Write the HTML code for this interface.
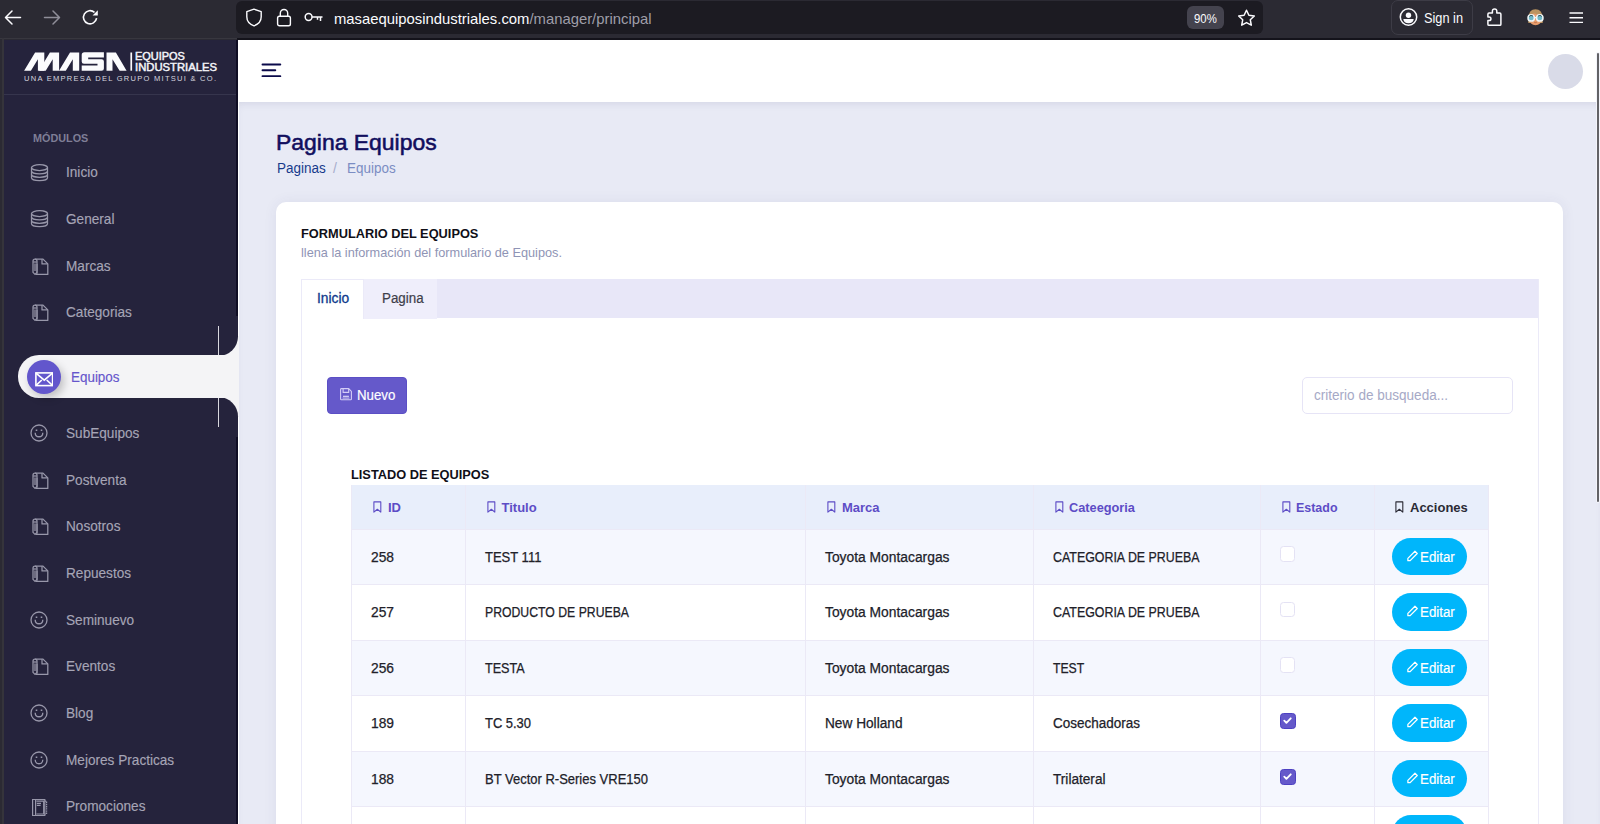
<!DOCTYPE html>
<html><head><meta charset="utf-8"><title>Pagina Equipos</title>
<style>
*{box-sizing:border-box;margin:0;padding:0}
html,body{width:1600px;height:824px;overflow:hidden;background:#2b2a33;font-family:"Liberation Sans",sans-serif}
.t{position:absolute;white-space:nowrap;line-height:1;transform-origin:0 0}
.ic{position:absolute;display:block}
.abs{position:absolute}
.row{position:absolute;left:351px;width:1137.4px}
.vl{position:absolute;top:485px;bottom:0;width:1px;background:#ebe9f6}
.hl{position:absolute;left:351px;width:1137.4px;height:1px;background:#ebe9f6}
.cb{position:absolute;left:1279.5px;width:15.5px;height:15.5px;border:1px solid #e4e2f4;border-radius:3.5px;background:#fff}
.cb.on{background:#6559ca;border-color:#4d41c2}
.cb.on svg{position:absolute;left:-1px;top:-1px}
.btn-ed{position:absolute;left:1392px;width:75px;height:37.5px;border-radius:19px;background:#00b6fb}
</style></head><body>
<!-- browser toolbar -->
<div class=abs style="left:0;top:0;width:1600px;height:38px;background:#2b2a33"></div>
<div class=abs style="left:0;top:37.5px;width:237px;height:0.7px;background:#242328"></div>
<div class=abs style="left:0;top:38.3px;width:237px;height:1.2px;background:#38373f"></div>
<div class=abs style="left:237px;top:38px;width:1363px;height:1.5px;background:#14131b"></div>
<div class=abs style="left:2px;top:38px;width:2px;height:786px;background:#35343b"></div>
<svg class=ic style="left:4px;top:9px" width="18" height="17" viewBox="0 0 18 17" fill="none" stroke="#fbfbfe" stroke-width="1.5" stroke-linecap="round" stroke-linejoin="round"><path d="M16.5 8.5H2M8 2L1.5 8.5 8 15"/></svg>
<svg class=ic style="left:43px;top:9px" width="18" height="17" viewBox="0 0 18 17" fill="none" stroke="#8f8e99" stroke-width="1.5" stroke-linecap="round" stroke-linejoin="round"><path d="M1.5 8.5H16M10 2l6.5 6.5L10 15"/></svg>
<svg class=ic style="left:81.3px;top:7.9px" width="19" height="19" viewBox="0 0 19 19" fill="none" stroke="#fbfbfe" stroke-width="1.6"><path d="M15.6 10.2A6.6 6.6 0 1 1 13.5 4.3"/><path d="M16.8 2.2v5.2h-5.2z" fill="#fbfbfe" stroke="none"/></svg>
<div class=abs style="left:236px;top:1px;width:1026.5px;height:33px;border-radius:6px;background:#1c1b22"></div>
<svg class=ic style="left:245px;top:8px" width="18" height="19" viewBox="0 0 18 19" fill="none" stroke="#fbfbfe" stroke-width="1.4" stroke-linejoin="round"><path d="M9 1.2L1.8 3.6v5.2c0 4.4 3.2 7.6 7.2 9 4-1.4 7.2-4.6 7.2-9V3.6z"/></svg>
<svg class=ic style="left:276px;top:8px" width="16" height="19" viewBox="0 0 16 19" fill="none" stroke="#fbfbfe" stroke-width="1.4"><rect x="1.6" y="8.3" width="12.8" height="9.5" rx="1.8"/><path d="M4.3 8.3V5.2a3.7 3.7 0 0 1 7.4 0v3.1"/></svg>
<svg class=ic style="left:304px;top:12px" width="20" height="11" viewBox="0 0 20 11" fill="none" stroke="#fbfbfe" stroke-width="1.5"><circle cx="4.6" cy="5" r="3.4"/><path d="M8 5h10.5M16.5 5v4M13.5 5v2.8"/></svg>
<div class=abs style="left:1187px;top:6px;width:37px;height:22.5px;border-radius:6px;background:#44434e"></div>
<svg class=ic style="left:1236.5px;top:9.3px" width="19" height="18" viewBox="0 0 19 18" fill="none" stroke="#fbfbfe" stroke-width="1.5" stroke-linejoin="round" stroke-linecap="round"><path d="M9.5 1.3l2.4 5 5.4.7-4 3.8 1 5.4-4.8-2.6-4.8 2.6 1-5.4-4-3.8 5.4-.7z"/></svg>
<div class=abs style="left:1391px;top:0px;width:81.5px;height:34.5px;border-radius:7px;border:1px solid #3d3c46"></div>
<svg class=ic style="left:1399.4px;top:6.9px" width="19" height="20" viewBox="0 0 19 20" fill="none" stroke="#fbfbfe" stroke-width="1.5"><circle cx="9.5" cy="10" r="8.2"/><circle cx="9.5" cy="8.3" r="2.7" fill="#fbfbfe" stroke="none"/><path d="M4.3 11.9H14.7Q14.1 16.3 9.5 16.3Q4.9 16.3 4.3 11.9Z" fill="#fbfbfe" stroke="none"/></svg>
<svg class=ic style="left:1486.3px;top:8px" width="17" height="19" viewBox="0 0 17 19" fill="none" stroke="#fbfbfe" stroke-width="1.5" stroke-linejoin="round"><path d="M6.4 3.1a2.2 2.2 0 0 1 4.4 0V5.1H13.8Q14.9 5.1 14.9 6.2V16.2Q14.9 17.3 13.8 17.3H3Q1.9 17.3 1.9 16.2V12.6H3.1a1.85 1.85 0 0 0 0-3.7H1.9V6.2Q1.9 5.1 3 5.1H6.4z"/></svg>
<svg class=ic style="left:1526px;top:8px" width="19" height="18" viewBox="0 0 19 18"><path d="M2.3 10C2.3 4.6 5.4 1.2 9.5 1.2S16.7 4.6 16.7 10V15H2.3z" fill="#bb9461"/><ellipse cx="9.5" cy="11" rx="6.3" ry="6.2" fill="#e79d6d"/><path d="M3 9C4 5.5 6.5 3.6 9.5 3.6S15 5.5 16 9C14 7 12 6.3 10.5 6.3 9.5 5.5 8 5.3 6.5 6 5 6.6 4 7.5 3 9z" fill="#bb9461"/><circle cx="5.2" cy="9.9" r="3.2" fill="#6fb9c9" stroke="#eef5f7" stroke-width="1.5"/><circle cx="13.8" cy="9.9" r="3.2" fill="#6fb9c9" stroke="#eef5f7" stroke-width="1.5"/><path d="M8.4 9.6h2.2" stroke="#eef5f7" stroke-width="1.3"/><path d="M3.3 8.4a2.4 2.4 0 0 1 3.8 0M11.9 8.4a2.4 2.4 0 0 1 3.8 0" stroke="#24414a" stroke-width="1" fill="none"/><path d="M8.2 14.3c.8.4 1.8.4 2.6 0" stroke="#b0603c" stroke-width=".7" fill="none"/></svg>
<svg class=ic style="left:1569px;top:11.5px" width="14.5" height="11.5" viewBox="0 0 14.5 11.5" stroke="#fbfbfe" stroke-width="1.5"><path d="M.5 1h13.5M.5 5.7h13.5M.5 10.4h13.5"/></svg>

<!-- page -->
<div class=abs style="left:4px;top:39.5px;width:1596px;height:785px;background:#e8eaf5;overflow:hidden"></div>
<!-- header -->
<div class=abs style="left:239px;top:102.2px;width:1361px;height:723px;box-shadow:inset 0 5px 8px -4px rgba(40,40,90,.12)"></div>
<div class=abs style="left:237px;top:39.5px;width:1363px;height:62.7px;background:#fff"></div>
<div class=abs style="left:237px;top:39.5px;width:2px;height:785px;background:#fff"></div>
<svg class=ic style="left:261px;top:63.3px" width="21" height="14" viewBox="0 0 21 14" stroke="#0b0a4a" stroke-width="1.9" stroke-linecap="round"><path d="M1.5 1.5h17.8M1.5 7.3h12.8M1.5 13.2h17.8"/></svg>
<div class=abs style="left:1548px;top:54px;width:35px;height:35px;border-radius:50%;background:#d9dbe8"></div>
<!-- scrollbar -->
<div class=abs style="left:1596px;top:52px;width:3.5px;height:451px;border-radius:2px;background:#f3f4fa"></div>
<div class=abs style="left:1597.2px;top:53px;width:1.6px;height:449px;border-radius:1px;background:#626266"></div>

<!-- sidebar -->
<div class=abs style="left:4px;top:39.5px;width:233px;height:785px;background:#25233c"></div>
<div class=abs style="left:236.3px;top:39.5px;width:1.5px;height:785px;background:#0f0d24"></div>
<div class=abs style="left:4px;top:93.5px;width:232px;height:1px;background:#36354d"></div>
<!-- logo -->
<svg class=ic style="left:0;top:0" width="240" height="100" viewBox="0 0 240 100" fill="#fbfbfd">
<path d="M24.1 70.7L35.1 52.5H44.3V70.7H37.9V59.2L30.9 70.7Z"/>
<path d="M38.9 70.7L49.9 52.5H59.1V70.7H52.7V59.2L45.7 70.7Z"/>
<path d="M59 70.7L70 52.5H79.2V70.7H72.8V59.2L65.8 70.7Z"/>
<path d="M84.5 52.3H103.9V57.5H88.2V59.3H101.6Q103.9 59.3 103.9 61.6V68.5Q103.9 70.8 101.6 70.8H81.7V65.5H97.5V63.7H84Q81.7 63.7 81.7 61.4V54.9Q81.7 52.3 84.5 52.3Z"/>
<path d="M106.5 52.5H115.9L126.6 70.7H119.6L112.5 59.2V70.7H106.5Z"/>
<rect x="130.4" y="52.5" width="1.7" height="18.2"/>
</svg>
<!-- active item -->
<div class=abs style="left:218px;top:336px;width:21px;height:81px;background:#f4f4f6"></div>
<div class=abs style="left:4px;top:316px;width:233.6px;height:40px;background:#25233c;border-bottom-right-radius:19.5px"></div>
<div class=abs style="left:4px;top:396.5px;width:233.6px;height:40px;background:#25233c;border-top-right-radius:19.5px"></div>
<div class=abs style="left:218px;top:325.5px;width:1px;height:30px;background:#d8d8de"></div>
<div class=abs style="left:218px;top:396.5px;width:1px;height:30px;background:#d8d8de"></div>
<div class=abs style="left:18.3px;top:355.3px;width:220.7px;height:42.3px;background:#f4f4f6;border-radius:21px 0 0 21px"></div>
<div class=abs style="left:26.7px;top:360px;width:34px;height:34px;border-radius:50%;background:#6256cc;box-shadow:3px 4px 8px rgba(0,0,0,.22)"></div>
<svg class=ic style="left:34.8px;top:372px" width="18.5" height="14.5" viewBox="0 0 18.5 14.5" fill="none" stroke="#fff" stroke-width="1.6"><rect x=".9" y=".9" width="16.7" height="12.7"/><path d="M1 1.2l8.25 7 8.25-7M1 13.3l5.8-5.3M17.5 13.3l-5.8-5.3"/></svg>
<svg class=ic style="left:30px;top:162.7px" width="19" height="19" viewBox="0 0 19 19" fill="none" stroke="#9897aa" stroke-width="1.25"><ellipse cx="9.5" cy="4.6" rx="8" ry="2.9"/><path d="M1.5 4.6v10.2c0 1.6 3.6 2.9 8 2.9s8-1.3 8-2.9V4.6"/><path d="M1.5 8c0 1.6 3.6 2.9 8 2.9s8-1.3 8-2.9M1.5 11.4c0 1.6 3.6 2.9 8 2.9s8-1.3 8-2.9"/></svg>
<svg class=ic style="left:30px;top:209.3px" width="19" height="19" viewBox="0 0 19 19" fill="none" stroke="#9897aa" stroke-width="1.25"><ellipse cx="9.5" cy="4.6" rx="8" ry="2.9"/><path d="M1.5 4.6v10.2c0 1.6 3.6 2.9 8 2.9s8-1.3 8-2.9V4.6"/><path d="M1.5 8c0 1.6 3.6 2.9 8 2.9s8-1.3 8-2.9M1.5 11.4c0 1.6 3.6 2.9 8 2.9s8-1.3 8-2.9"/></svg>
<svg class=ic style="left:30.5px;top:256.7px" width="19" height="19" viewBox="0 0 19 19" fill="none" stroke="#9897aa" stroke-width="1.25" stroke-linejoin="round"><path d="M4 2.1H12L16.8 6.9V17.4H4.5"/><path d="M11 2.3V6.9H16.6"/><path d="M2 4.2Q2 2.1 4 2.1Q6 2.1 6 4.2V15.4L4 17.4L2 15.4Z"/><path d="M4 6.5V14"/><path d="M2.2 5h3.6"/><path d="M6 6.9v10.5" stroke-width="1"/></svg>
<svg class=ic style="left:30.5px;top:303.3px" width="19" height="19" viewBox="0 0 19 19" fill="none" stroke="#9897aa" stroke-width="1.25" stroke-linejoin="round"><path d="M4 2.1H12L16.8 6.9V17.4H4.5"/><path d="M11 2.3V6.9H16.6"/><path d="M2 4.2Q2 2.1 4 2.1Q6 2.1 6 4.2V15.4L4 17.4L2 15.4Z"/><path d="M4 6.5V14"/><path d="M2.2 5h3.6"/><path d="M6 6.9v10.5" stroke-width="1"/></svg>
<svg class=ic style="left:30.4px;top:424.4px" width="18" height="18" viewBox="0 0 18 18" fill="none" stroke="#9897aa" stroke-width="1.3"><circle cx="9" cy="9" r="8"/><path d="M5.2 8.7C5.2 14.1 12.8 14.1 12.8 8.7"/><path d="M5.7 6.3h1.6M10.7 6.3h1.6" stroke-width="1.5"/></svg>
<svg class=ic style="left:30.5px;top:470.7px" width="19" height="19" viewBox="0 0 19 19" fill="none" stroke="#9897aa" stroke-width="1.25" stroke-linejoin="round"><path d="M4 2.1H12L16.8 6.9V17.4H4.5"/><path d="M11 2.3V6.9H16.6"/><path d="M2 4.2Q2 2.1 4 2.1Q6 2.1 6 4.2V15.4L4 17.4L2 15.4Z"/><path d="M4 6.5V14"/><path d="M2.2 5h3.6"/><path d="M6 6.9v10.5" stroke-width="1"/></svg>
<svg class=ic style="left:30.5px;top:517.3px" width="19" height="19" viewBox="0 0 19 19" fill="none" stroke="#9897aa" stroke-width="1.25" stroke-linejoin="round"><path d="M4 2.1H12L16.8 6.9V17.4H4.5"/><path d="M11 2.3V6.9H16.6"/><path d="M2 4.2Q2 2.1 4 2.1Q6 2.1 6 4.2V15.4L4 17.4L2 15.4Z"/><path d="M4 6.5V14"/><path d="M2.2 5h3.6"/><path d="M6 6.9v10.5" stroke-width="1"/></svg>
<svg class=ic style="left:30.5px;top:564.0px" width="19" height="19" viewBox="0 0 19 19" fill="none" stroke="#9897aa" stroke-width="1.25" stroke-linejoin="round"><path d="M4 2.1H12L16.8 6.9V17.4H4.5"/><path d="M11 2.3V6.9H16.6"/><path d="M2 4.2Q2 2.1 4 2.1Q6 2.1 6 4.2V15.4L4 17.4L2 15.4Z"/><path d="M4 6.5V14"/><path d="M2.2 5h3.6"/><path d="M6 6.9v10.5" stroke-width="1"/></svg>
<svg class=ic style="left:30.4px;top:611.1px" width="18" height="18" viewBox="0 0 18 18" fill="none" stroke="#9897aa" stroke-width="1.3"><circle cx="9" cy="9" r="8"/><path d="M5.2 8.7C5.2 14.1 12.8 14.1 12.8 8.7"/><path d="M5.7 6.3h1.6M10.7 6.3h1.6" stroke-width="1.5"/></svg>
<svg class=ic style="left:30.5px;top:657.3px" width="19" height="19" viewBox="0 0 19 19" fill="none" stroke="#9897aa" stroke-width="1.25" stroke-linejoin="round"><path d="M4 2.1H12L16.8 6.9V17.4H4.5"/><path d="M11 2.3V6.9H16.6"/><path d="M2 4.2Q2 2.1 4 2.1Q6 2.1 6 4.2V15.4L4 17.4L2 15.4Z"/><path d="M4 6.5V14"/><path d="M2.2 5h3.6"/><path d="M6 6.9v10.5" stroke-width="1"/></svg>
<svg class=ic style="left:30.4px;top:704.4px" width="18" height="18" viewBox="0 0 18 18" fill="none" stroke="#9897aa" stroke-width="1.3"><circle cx="9" cy="9" r="8"/><path d="M5.2 8.7C5.2 14.1 12.8 14.1 12.8 8.7"/><path d="M5.7 6.3h1.6M10.7 6.3h1.6" stroke-width="1.5"/></svg>
<svg class=ic style="left:30.4px;top:751.1px" width="18" height="18" viewBox="0 0 18 18" fill="none" stroke="#9897aa" stroke-width="1.3"><circle cx="9" cy="9" r="8"/><path d="M5.2 8.7C5.2 14.1 12.8 14.1 12.8 8.7"/><path d="M5.7 6.3h1.6M10.7 6.3h1.6" stroke-width="1.5"/></svg>
<svg class=ic style="left:31px;top:797.8px" width="18" height="19" viewBox="0 0 18 19" fill="none" stroke="#9897aa" stroke-width="1.2"><path d="M1.6 1.5h12.2v16H1.6z"/><path d="M4.6 1.5v16M5.5 3.2h7.2v12.8H5.5"/><path d="M13.8 3.2h1.8v12.8h-1.8" stroke-dasharray="1.4 .8"/><path d="M5.8 5.4h4.2M5.8 7.4h3.8" stroke-width="1.1"/></svg>

<!-- title area -->
<!-- card -->
<div class=abs style="left:276px;top:202px;width:1287px;height:700px;background:#fff;border-radius:10px;box-shadow:0 0 14px rgba(60,60,120,.07)"></div>
<div class=abs style="left:300.5px;top:279px;width:1238px;height:560px;border:1px solid #ebeaf8;border-top:none"></div>
<div class=abs style="left:300.5px;top:279px;width:1237.4px;height:39.2px;background:#e8e7f8"></div>
<div class=abs style="left:363.3px;top:279px;width:74px;height:39.5px;background:#efeefb"></div>
<div class=abs style="left:300.5px;top:279px;width:63px;height:40px;background:#fff;border:1px solid #ebeaf8;border-bottom:none"></div>
<div class=abs style="left:326.5px;top:377.2px;width:80.5px;height:36.6px;border-radius:4px;background:#6559ca;border:1px solid #5b4fc5"></div>
<svg class=ic style="left:340px;top:388px" width="12" height="12.5" viewBox="0 0 12 12.5" fill="none" stroke="#d4cdf6" stroke-width="1.1" stroke-linejoin="round"><path d="M1.4 .6H8.7L11.4 3.3V10.9Q11.4 11.7 10.6 11.7H1.4Q.6 11.7 .6 10.9V1.4Q.6 .6 1.4 .6Z"/><path d="M3.1 .7V4.4H8.7V.7"/><path d="M3 8.3H8.9" stroke="#e4e0fa"/><path d="M2.6 9.2H9.4V11H2.6z" fill="#9f95e0" stroke="none"/></svg>
<div class=abs style="left:1301.5px;top:377.2px;width:211px;height:36.4px;border-radius:5px;border:1px solid #e6e4f6;background:#fff"></div>
<!-- table -->
<div class=abs style="left:351px;top:485px;width:1137.4px;height:44px;background:#e8eefb"></div>
<div class=row style="top:529.0px;height:55.5px;background:#f5f7fe"></div>
<div class=cb style="top:546.4px"></div>
<div class=btn-ed style="top:537.9px"></div>
<svg class=ic style="left:1405.5px;top:549.5px" width="12.5" height="12.5" viewBox="0 0 12 12" fill="none" stroke="#fff" stroke-width="1.2" stroke-linejoin="round"><path d="M8.6 1.2l2.2 2.2-6.8 6.8H1.8V8z"/></svg>
<div class=row style="top:584.5px;height:55.5px;background:#ffffff"></div>
<div class=cb style="top:601.9px"></div>
<div class=btn-ed style="top:593.4px"></div>
<svg class=ic style="left:1405.5px;top:605.0px" width="12.5" height="12.5" viewBox="0 0 12 12" fill="none" stroke="#fff" stroke-width="1.2" stroke-linejoin="round"><path d="M8.6 1.2l2.2 2.2-6.8 6.8H1.8V8z"/></svg>
<div class=row style="top:640.0px;height:55.5px;background:#f5f7fe"></div>
<div class=cb style="top:657.4px"></div>
<div class=btn-ed style="top:648.9px"></div>
<svg class=ic style="left:1405.5px;top:660.5px" width="12.5" height="12.5" viewBox="0 0 12 12" fill="none" stroke="#fff" stroke-width="1.2" stroke-linejoin="round"><path d="M8.6 1.2l2.2 2.2-6.8 6.8H1.8V8z"/></svg>
<div class=row style="top:695.5px;height:55.5px;background:#ffffff"></div>
<div class="cb on" style="top:713.0px;height:16px;width:16px"><svg width="15.5" height="15.5" viewBox="0 0 16 16"><path d="M4.4 7.9l2.2 2.2 4.5-4.6" fill="none" stroke="#fff" stroke-width="1.9" stroke-linecap="round" stroke-linejoin="round"/></svg></div>
<div class=btn-ed style="top:704.4px"></div>
<svg class=ic style="left:1405.5px;top:716.0px" width="12.5" height="12.5" viewBox="0 0 12 12" fill="none" stroke="#fff" stroke-width="1.2" stroke-linejoin="round"><path d="M8.6 1.2l2.2 2.2-6.8 6.8H1.8V8z"/></svg>
<div class=row style="top:751.0px;height:55.5px;background:#f5f7fe"></div>
<div class="cb on" style="top:768.5px;height:16px;width:16px"><svg width="15.5" height="15.5" viewBox="0 0 16 16"><path d="M4.4 7.9l2.2 2.2 4.5-4.6" fill="none" stroke="#fff" stroke-width="1.9" stroke-linecap="round" stroke-linejoin="round"/></svg></div>
<div class=btn-ed style="top:759.9px"></div>
<svg class=ic style="left:1405.5px;top:771.5px" width="12.5" height="12.5" viewBox="0 0 12 12" fill="none" stroke="#fff" stroke-width="1.2" stroke-linejoin="round"><path d="M8.6 1.2l2.2 2.2-6.8 6.8H1.8V8z"/></svg>
<div class=row style="top:806.5px;height:55.5px;background:#ffffff"></div>
<div class=btn-ed style="top:815.4px"></div>
<svg class=ic style="left:1405.5px;top:827.0px" width="12.5" height="12.5" viewBox="0 0 12 12" fill="none" stroke="#fff" stroke-width="1.2" stroke-linejoin="round"><path d="M8.6 1.2l2.2 2.2-6.8 6.8H1.8V8z"/></svg>
<div class=vl style="left:465.4px"></div>
<div class=vl style="left:805.2px"></div>
<div class=vl style="left:1032.6px"></div>
<div class=vl style="left:1259.8px"></div>
<div class=vl style="left:1373.8px"></div>
<div class=hl style="top:528.5px"></div>
<div class=hl style="top:584.0px"></div>
<div class=hl style="top:639.5px"></div>
<div class=hl style="top:695.0px"></div>
<div class=hl style="top:750.5px"></div>
<div class=hl style="top:806.0px"></div>
<svg class=ic style="left:373px;top:500.8px" width="9" height="12" viewBox="0 0 9 12" fill="none" stroke="#5d4cc6" stroke-width="1.1" stroke-linejoin="round"><path d="M.9 .9h6.9v10.2L4.35 8.3 .9 11.1z"/></svg>
<svg class=ic style="left:486.5px;top:500.8px" width="9" height="12" viewBox="0 0 9 12" fill="none" stroke="#5d4cc6" stroke-width="1.1" stroke-linejoin="round"><path d="M.9 .9h6.9v10.2L4.35 8.3 .9 11.1z"/></svg>
<svg class=ic style="left:827px;top:500.8px" width="9" height="12" viewBox="0 0 9 12" fill="none" stroke="#5d4cc6" stroke-width="1.1" stroke-linejoin="round"><path d="M.9 .9h6.9v10.2L4.35 8.3 .9 11.1z"/></svg>
<svg class=ic style="left:1054.5px;top:500.8px" width="9" height="12" viewBox="0 0 9 12" fill="none" stroke="#5d4cc6" stroke-width="1.1" stroke-linejoin="round"><path d="M.9 .9h6.9v10.2L4.35 8.3 .9 11.1z"/></svg>
<svg class=ic style="left:1282px;top:500.8px" width="9" height="12" viewBox="0 0 9 12" fill="none" stroke="#5d4cc6" stroke-width="1.1" stroke-linejoin="round"><path d="M.9 .9h6.9v10.2L4.35 8.3 .9 11.1z"/></svg>
<svg class=ic style="left:1395px;top:500.8px" width="9" height="12" viewBox="0 0 9 12" fill="none" stroke="#2a2a35" stroke-width="1.1" stroke-linejoin="round"><path d="M.9 .9h6.9v10.2L4.35 8.3 .9 11.1z"/></svg>
<div class=abs style="left:350.5px;top:485px;width:1px;height:339px;background:#ebe9f6"></div>
<div class=abs style="left:1488px;top:485px;width:1px;height:339px;background:#ebe9f6"></div>
<div class=t style="left:333.5px;top:11.57px;font-size:14.8px;color:#9f9ea8;transform:scaleX(1.0026);"><span style="color:#fbfbfe">masaequiposindustriales.com</span>/manager/principal</div>
<div class=t style="left:1194.2px;top:12.76px;font-size:12.8px;color:#fbfbfe;transform:scaleX(0.8898);">90%</div>
<div class=t style="left:1424.3px;top:11.05px;font-size:14px;color:#fbfbfe;transform:scaleX(0.9109);">Sign in</div>
<div class=t style="left:135.3px;top:52.10px;font-size:10.4px;color:#f4f4f8;transform:scaleX(1.0536);-webkit-text-stroke:0.45px #f4f4f8;">EQUIPOS</div>
<div class=t style="left:135.3px;top:62.60px;font-size:10.4px;color:#f4f4f8;transform:scaleX(1.0841);-webkit-text-stroke:0.45px #f4f4f8;">INDUSTRIALES</div>
<div class=t style="left:24.0px;top:74.53px;font-size:8.0px;color:#d6d5df;transform:scaleX(0.9400);letter-spacing:1.35px;">UNA EMPRESA DEL GRUPO MITSUI &amp; CO.</div>
<div class=t style="left:32.8px;top:132.61px;font-size:10.5px;color:#7f7e96;font-weight:700;transform:scaleX(1.0303);">MÓDULOS</div>
<div class=t style="left:66.3px;top:165.37px;font-size:14.8px;color:#a6a5b6;transform:scaleX(0.9200);-webkit-text-stroke:0.15px #a6a5b6;">Inicio</div>
<div class=t style="left:66.3px;top:212.07px;font-size:14.8px;color:#a6a5b6;transform:scaleX(0.9200);-webkit-text-stroke:0.15px #a6a5b6;">General</div>
<div class=t style="left:66.3px;top:258.77px;font-size:14.8px;color:#a6a5b6;transform:scaleX(0.9200);-webkit-text-stroke:0.15px #a6a5b6;">Marcas</div>
<div class=t style="left:66.3px;top:305.37px;font-size:14.8px;color:#a6a5b6;transform:scaleX(0.9200);-webkit-text-stroke:0.15px #a6a5b6;">Categorias</div>
<div class=t style="left:66.3px;top:426.07px;font-size:14.8px;color:#a6a5b6;transform:scaleX(0.9200);-webkit-text-stroke:0.15px #a6a5b6;">SubEquipos</div>
<div class=t style="left:66.3px;top:472.77px;font-size:14.8px;color:#a6a5b6;transform:scaleX(0.9200);-webkit-text-stroke:0.15px #a6a5b6;">Postventa</div>
<div class=t style="left:66.3px;top:519.37px;font-size:14.8px;color:#a6a5b6;transform:scaleX(0.9200);-webkit-text-stroke:0.15px #a6a5b6;">Nosotros</div>
<div class=t style="left:66.3px;top:566.07px;font-size:14.8px;color:#a6a5b6;transform:scaleX(0.9200);-webkit-text-stroke:0.15px #a6a5b6;">Repuestos</div>
<div class=t style="left:66.3px;top:612.77px;font-size:14.8px;color:#a6a5b6;transform:scaleX(0.9200);-webkit-text-stroke:0.15px #a6a5b6;">Seminuevo</div>
<div class=t style="left:66.3px;top:659.37px;font-size:14.8px;color:#a6a5b6;transform:scaleX(0.9200);-webkit-text-stroke:0.15px #a6a5b6;">Eventos</div>
<div class=t style="left:66.3px;top:706.07px;font-size:14.8px;color:#a6a5b6;transform:scaleX(0.9200);-webkit-text-stroke:0.15px #a6a5b6;">Blog</div>
<div class=t style="left:66.3px;top:752.77px;font-size:14.8px;color:#a6a5b6;transform:scaleX(0.9200);-webkit-text-stroke:0.15px #a6a5b6;">Mejores Practicas</div>
<div class=t style="left:66.3px;top:799.37px;font-size:14.8px;color:#a6a5b6;transform:scaleX(0.9200);-webkit-text-stroke:0.15px #a6a5b6;">Promociones</div>
<div class=t style="left:71.3px;top:369.65px;font-size:14px;color:#6656cc;transform:scaleX(0.9586);-webkit-text-stroke:0.15px #6656cc;">Equipos</div>
<div class=t style="left:276.3px;top:131.64px;font-size:22.4px;color:#110e5e;transform:scaleX(1.0238);-webkit-text-stroke:0.55px #110e5e;">Pagina Equipos</div>
<div class=t style="left:276.9px;top:160.95px;font-size:14px;color:#173a8c;transform:scaleX(0.9626);">Paginas</div>
<div class=t style="left:333.0px;top:160.95px;font-size:14px;color:#a7adcc;">/</div>
<div class=t style="left:346.8px;top:160.95px;font-size:14px;color:#7b8dc3;transform:scaleX(0.9606);">Equipos</div>
<div class=t style="left:301.0px;top:226.73px;font-size:13.2px;color:#101018;font-weight:700;transform:scaleX(0.9697);">FORMULARIO DEL EQUIPOS</div>
<div class=t style="left:301.0px;top:247.48px;font-size:12.9px;color:#8f94b5;transform:scaleX(0.9871);">llena la información del formulario de Equipos.</div>
<div class=t style="left:316.8px;top:291.72px;font-size:13.8px;color:#0f3a8d;transform:scaleX(0.9994);-webkit-text-stroke:0.3px #0f3a8d;">Inicio</div>
<div class=t style="left:381.5px;top:291.72px;font-size:13.8px;color:#3e3e4a;transform:scaleX(0.9681);-webkit-text-stroke:0.2px #3e3e4a;">Pagina</div>
<div class=t style="left:356.6px;top:387.97px;font-size:14.8px;color:#ffffff;transform:scaleX(0.8976);-webkit-text-stroke:0.2px #fff;">Nuevo</div>
<div class=t style="left:1314.0px;top:388.62px;font-size:13.8px;color:#a6a9c6;transform:scaleX(0.9815);">criterio de busqueda...</div>
<div class=t style="left:350.7px;top:468.36px;font-size:13.4px;color:#101018;font-weight:700;transform:scaleX(0.9548);">LISTADO DE EQUIPOS</div>
<div class=t style="left:388.0px;top:501.00px;font-size:13px;color:#5d4cc6;font-weight:700;">ID</div>
<div class=t style="left:501.5px;top:501.00px;font-size:13px;color:#5d4cc6;font-weight:700;">Titulo</div>
<div class=t style="left:842.0px;top:501.00px;font-size:13px;color:#5d4cc6;font-weight:700;">Marca</div>
<div class=t style="left:1069.4px;top:501.00px;font-size:13px;color:#5d4cc6;font-weight:700;transform:scaleX(0.9806);">Cateegoria</div>
<div class=t style="left:1296.4px;top:501.00px;font-size:13px;color:#5d4cc6;font-weight:700;transform:scaleX(0.9575);">Estado</div>
<div class=t style="left:1410.0px;top:501.00px;font-size:13px;color:#2a2a35;font-weight:700;">Acciones</div>
<div class=t style="left:370.8px;top:549.85px;font-size:14px;color:#212129;transform:scaleX(0.9846);-webkit-text-stroke:0.25px #212129;">258</div>
<div class=t style="left:485.0px;top:549.85px;font-size:14px;color:#212129;transform:scaleX(0.9291);-webkit-text-stroke:0.25px #212129;">TEST 111</div>
<div class=t style="left:825.0px;top:549.85px;font-size:14px;color:#212129;transform:scaleX(0.9875);-webkit-text-stroke:0.25px #212129;">Toyota Montacargas</div>
<div class=t style="left:1052.5px;top:549.85px;font-size:14px;color:#212129;transform:scaleX(0.8861);-webkit-text-stroke:0.25px #212129;">CATEGORIA DE PRUEBA</div>
<div class=t style="left:1419.6px;top:549.55px;font-size:14px;color:#ffffff;transform:scaleX(0.9514);-webkit-text-stroke:0.2px #fff;">Editar</div>
<div class=t style="left:370.8px;top:605.35px;font-size:14px;color:#212129;transform:scaleX(0.9846);-webkit-text-stroke:0.25px #212129;">257</div>
<div class=t style="left:485.0px;top:605.35px;font-size:14px;color:#212129;transform:scaleX(0.8745);-webkit-text-stroke:0.25px #212129;">PRODUCTO DE PRUEBA</div>
<div class=t style="left:825.0px;top:605.35px;font-size:14px;color:#212129;transform:scaleX(0.9875);-webkit-text-stroke:0.25px #212129;">Toyota Montacargas</div>
<div class=t style="left:1052.5px;top:605.35px;font-size:14px;color:#212129;transform:scaleX(0.8861);-webkit-text-stroke:0.25px #212129;">CATEGORIA DE PRUEBA</div>
<div class=t style="left:1419.6px;top:605.05px;font-size:14px;color:#ffffff;transform:scaleX(0.9514);-webkit-text-stroke:0.2px #fff;">Editar</div>
<div class=t style="left:370.8px;top:660.85px;font-size:14px;color:#212129;transform:scaleX(0.9846);-webkit-text-stroke:0.25px #212129;">256</div>
<div class=t style="left:485.0px;top:660.85px;font-size:14px;color:#212129;transform:scaleX(0.9007);-webkit-text-stroke:0.25px #212129;">TESTA</div>
<div class=t style="left:825.0px;top:660.85px;font-size:14px;color:#212129;transform:scaleX(0.9875);-webkit-text-stroke:0.25px #212129;">Toyota Montacargas</div>
<div class=t style="left:1052.5px;top:660.85px;font-size:14px;color:#212129;transform:scaleX(0.8734);-webkit-text-stroke:0.25px #212129;">TEST</div>
<div class=t style="left:1419.6px;top:660.55px;font-size:14px;color:#ffffff;transform:scaleX(0.9514);-webkit-text-stroke:0.2px #fff;">Editar</div>
<div class=t style="left:370.8px;top:716.35px;font-size:14px;color:#212129;transform:scaleX(0.9846);-webkit-text-stroke:0.25px #212129;">189</div>
<div class=t style="left:485.0px;top:716.35px;font-size:14px;color:#212129;transform:scaleX(0.9235);-webkit-text-stroke:0.25px #212129;">TC 5.30</div>
<div class=t style="left:825.0px;top:716.35px;font-size:14px;color:#212129;transform:scaleX(0.9764);-webkit-text-stroke:0.25px #212129;">New Holland</div>
<div class=t style="left:1052.5px;top:716.35px;font-size:14px;color:#212129;transform:scaleX(0.9637);-webkit-text-stroke:0.25px #212129;">Cosechadoras</div>
<div class=t style="left:1419.6px;top:716.05px;font-size:14px;color:#ffffff;transform:scaleX(0.9514);-webkit-text-stroke:0.2px #fff;">Editar</div>
<div class=t style="left:370.8px;top:771.85px;font-size:14px;color:#212129;transform:scaleX(0.9846);-webkit-text-stroke:0.25px #212129;">188</div>
<div class=t style="left:485.0px;top:771.85px;font-size:14px;color:#212129;transform:scaleX(0.9282);-webkit-text-stroke:0.25px #212129;">BT Vector R-Series VRE150</div>
<div class=t style="left:825.0px;top:771.85px;font-size:14px;color:#212129;transform:scaleX(0.9875);-webkit-text-stroke:0.25px #212129;">Toyota Montacargas</div>
<div class=t style="left:1052.5px;top:771.85px;font-size:14px;color:#212129;transform:scaleX(0.9733);-webkit-text-stroke:0.25px #212129;">Trilateral</div>
<div class=t style="left:1419.6px;top:771.55px;font-size:14px;color:#ffffff;transform:scaleX(0.9514);-webkit-text-stroke:0.2px #fff;">Editar</div>
</body></html>
